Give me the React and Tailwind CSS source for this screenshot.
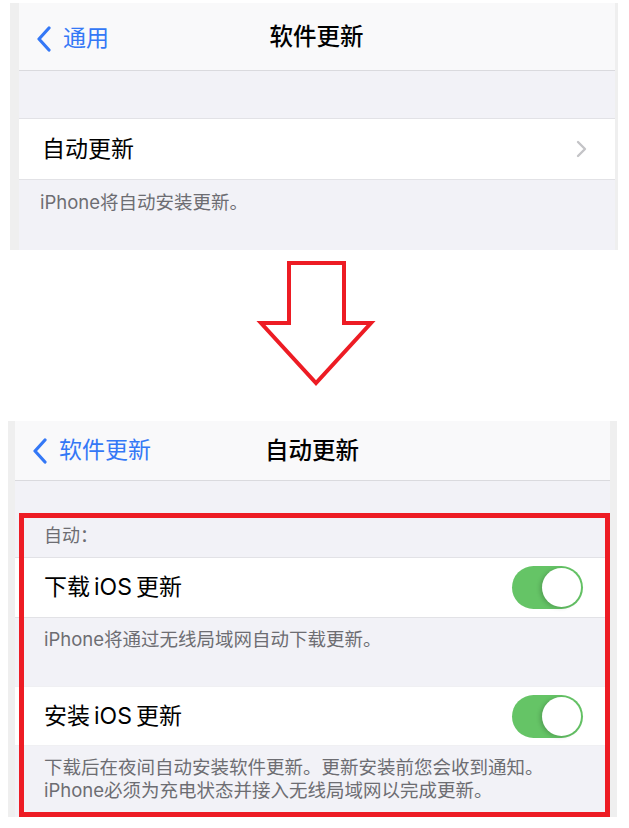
import React from 'react'

const FONT = "font-['Inter','Noto_Sans_CJK_SC',sans-serif]"

function BackChevron() {
  return (
    <svg width="16" height="26" viewBox="0 0 16 26" className="shrink-0">
      <path d="M13 2 L3 13 L13 24" fill="none" stroke="#3478f6" strokeWidth="3.2" strokeLinecap="round" strokeLinejoin="round" />
    </svg>
  )
}

function NavBar({ back, title, height, backLeft, backGap }) {
  return (
    <div
      className={`relative flex items-center bg-[#f9f9fa] border-b border-[#dadade] ${height}`}
    >
      <div className={`flex items-center ${backLeft} ${backGap}`}>
        <BackChevron />
        <span className="text-[23px] leading-none text-[#3478f6]">{back}</span>
      </div>
      <div className="absolute inset-0 flex items-center justify-center pr-[1px]">
        <span className="text-[23.5px] leading-none font-medium text-black">{title}</span>
      </div>
    </div>
  )
}

function Toggle() {
  return (
    <div className="w-[71px] h-[43px] rounded-full bg-[#65c466] flex items-center justify-end p-[2px]">
      <div className="w-[39px] h-[39px] rounded-full bg-white shadow-[-2px_1px_4px_rgba(0,0,0,0.18)]" />
    </div>
  )
}

function Footer({ children, className = '' }) {
  return (
    <div className={`text-[18.5px] leading-[23px] text-[#6d6d72] ${className}`}>{children}</div>
  )
}

function RowLabel({ pre, post }) {
  return (
    <span className="text-[23px] leading-none text-black">
      {pre}
      <span className="px-[4px]">iOS</span>
      {post}
    </span>
  )
}

// 上：软件更新页面
function SoftwareUpdate() {
  return (
    <div className="ml-[10px] mt-[3px] w-[608px] h-[247px] bg-[#efefef] pl-[9px] pr-[3px]">
      <div className="h-full bg-[#f2f2f7] flex flex-col">
        <NavBar back="通用" title="软件更新" height="h-[68px] pt-[4px]" backLeft="pl-[17px]" backGap="gap-[11px]" />
        <div className="h-[47px]" />
        <div className="h-[62px] bg-white border-y border-[#e2e2e6] flex items-center justify-between pl-[23px] pr-[28px]">
          <span className="text-[23px] leading-none text-black">自动更新</span>
          <svg width="11" height="18" viewBox="0 0 11 18">
            <path d="M2 2 L9 9 L2 16" fill="none" stroke="#c4c4c7" strokeWidth="2.4" strokeLinecap="round" strokeLinejoin="round" />
          </svg>
        </div>
        <Footer className="pl-[21px] pt-[11px]">iPhone将自动安装更新。</Footer>
      </div>
    </div>
  )
}

function DownArrow() {
  return (
    <div className="h-[171px]">
      <svg width="629" height="171" viewBox="0 0 629 171">
        <polygon
          points="289,13 344,13 344,73 371,73 316,133 261,73 289,73"
          fill="none"
          stroke="#ed1c24"
          strokeWidth="4"
          strokeLinejoin="miter"
        />
      </svg>
    </div>
  )
}

// 下：自动更新页面
function AutoUpdate() {
  return (
    <div className="relative ml-[8px] w-[609px] h-[396px] bg-[#efefef] px-[7px]">
      <div className="h-full bg-[#f2f2f7] flex flex-col">
        <NavBar back="软件更新" title="自动更新" height="h-[60px]" backLeft="pl-[17px]" backGap="gap-[11px]" />
        <div className="h-[76px] flex items-end pl-[29px] pb-[9px]">
          <span className="text-[18px] leading-[24px] text-[#6d6d72]">自动：</span>
        </div>
        <div className="h-[61px] bg-white border-y border-[#e2e2e6] flex items-center justify-between pl-[29px] pr-[27px]">
          <RowLabel pre="下载" post="更新" />
          <Toggle />
        </div>
        <div className="h-[68px] pl-[29px] pt-[10px]">
          <Footer>iPhone将通过无线局域网自动下载更新。</Footer>
        </div>
        <div className="h-[60px] bg-white border-y border-[#f0f0f3] flex items-center justify-between pl-[29px] pr-[27px]">
          <RowLabel pre="安装" post="更新" />
          <Toggle />
        </div>
        <Footer className="pl-[29px] pt-[10px]">
          下载后在夜间自动安装软件更新。更新安装前您会收到通知。
          <br />
          iPhone必须为充电状态并接入无线局域网以完成更新。
        </Footer>
      </div>
      <div className="absolute left-[11px] top-[92px] w-[591px] h-[304px] border-[5px] border-[#ed1c24]" />
    </div>
  )
}

export default function App() {
  return (
    <div className={`w-[629px] h-[828px] bg-white overflow-hidden ${FONT}`}>
      <SoftwareUpdate />
      <DownArrow />
      <AutoUpdate />
    </div>
  )
}
